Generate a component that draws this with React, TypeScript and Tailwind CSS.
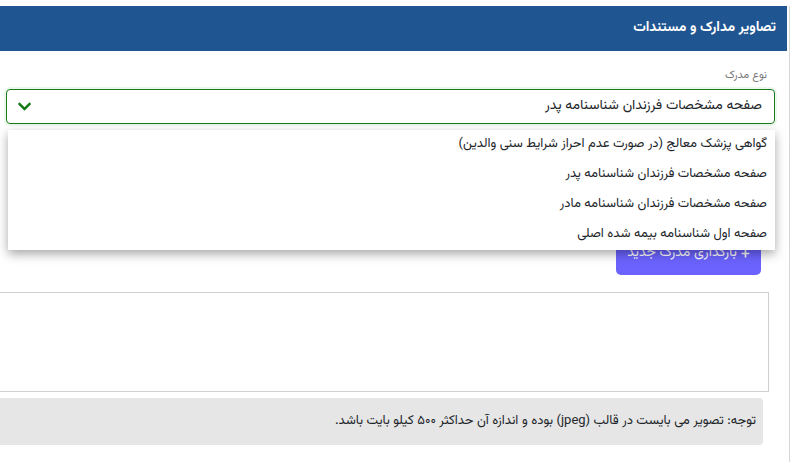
import { FaChevronDown, FaPlus } from 'react-icons/fa';

const options = [
  'گواهی پزشک معالج (در صورت عدم احراز شرایط سنی والدین)',
  'صفحه مشخصات فرزندان شناسنامه پدر',
  'صفحه مشخصات فرزندان شناسنامه مادر',
  'صفحه اول شناسنامه بیمه شده اصلی',
];

export default function App() {
  return (
    <div
      dir="rtl"
      className="w-[791px] h-[462px] overflow-hidden bg-white text-[#212529]"
      style={{ fontFamily: "Vazirmatn, Tahoma, 'DejaVu Sans', sans-serif" }}
    >
      <div className="mt-[6px] mr-[1px] h-[456px] border-r border-[#d6d6d6]">
        {/* header */}
        <div className="mr-[2px] h-[45px] bg-[#1f5591] flex items-center pr-[11px]">
          <h2 className="text-white text-[14px] font-bold">تصاویر مدارک و مستندات</h2>
        </div>

        <div className="pr-[14px] pl-[6px] pt-[17px]">
          <label className="block text-[11px] text-[#777] pr-[8px] leading-[16px]">نوع مدرک</label>
          <div className="relative mt-[5px]">
            <div className="h-[35px] rounded-[4px] border border-[#1a7a1a] shadow-[0_0_0_2px_rgba(120,200,120,0.15)] flex items-center justify-between pr-[12px] pl-[10px]">
              <span className="text-[14px]">صفحه مشخصات فرزندان شناسنامه پدر</span>
              <FaChevronDown className="text-[#127812] w-[15px] h-[15px]" />
            </div>

            {/* open dropdown */}
            <ul className="absolute top-[41px] right-0 left-[2px] z-10 bg-white shadow-[0_4px_10px_rgba(0,0,0,0.35)]">
              {options.map(o => (
                <li key={o} className="h-[30px] flex items-center pr-[8px] text-[13px]">{o}</li>
              ))}
            </ul>
          </div>

          {/* upload button */}
          <div className="pr-[14px] mt-[100px]">
            <button className="w-[145px] h-[51px] pt-[8px] rounded-[5px] bg-[#6c63ff] text-white text-[14px] flex items-center justify-center gap-1">
              <FaPlus className="w-[9px] h-[9px]" />
              بارگذاری مدرک جدید
            </button>
          </div>
        </div>

        {/* preview area */}
        <div className="mt-[17px] mr-[20px] h-[100px] border border-l-0 border-[#cfcfcf]"></div>

        {/* notice */}
        <div className="mt-[6px] mr-[26px] h-[47px] rounded-r-[4px] bg-[#e6e6e6] flex items-center pr-[7px] text-[13px]">
          توجه: تصویر می بایست در قالب (jpeg) بوده و اندازه آن حداکثر ۵۰۰ کیلو بایت باشد.
        </div>
      </div>
    </div>
  );
}
